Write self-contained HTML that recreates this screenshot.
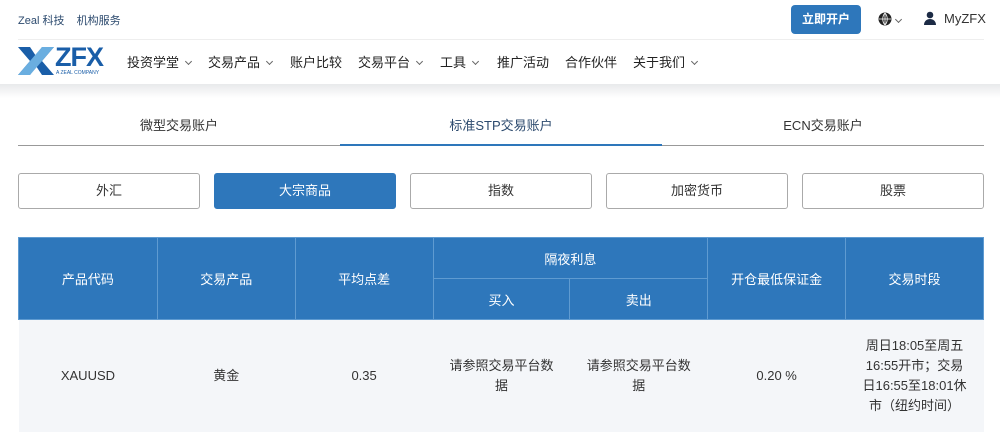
<!DOCTYPE html>
<html><head><meta charset="utf-8"><style>
*{margin:0;padding:0;box-sizing:border-box}
body{width:1000px;height:432px;overflow:hidden;background:#fff;font-family:"Liberation Sans","Noto Sans CJK SC",sans-serif;color:#333;position:relative}
.a{position:absolute}
.top{font-size:11px;color:#2c4a6e}
.nav span{position:absolute;top:52px;font-size:13px;color:#222}
.chev{display:inline-block;width:5px;height:5px;border-right:1px solid #666;border-bottom:1px solid #666;transform:rotate(45deg);margin-left:7px;position:relative;top:-3px}
.tab{top:115px;font-size:13px;width:322px;text-align:center}
.btn{top:173px;width:182px;height:36px;border:1px solid #aaa;border-radius:3px;font-size:13px;text-align:center;line-height:34px;color:#333}
table{position:absolute;left:18px;top:237px;width:966px;border-collapse:collapse;font-size:13px;text-align:center}
th{background:#2e77bb;color:#fff;font-weight:normal;border:1px solid #5f9bd1}
td{background:#f4f6f9;height:112px;line-height:20px;vertical-align:middle}
</style></head><body>
<div class="a top" style="left:18px;top:12px">Zeal 科技&nbsp;&nbsp;&nbsp;&nbsp;机构服务</div>
<div class="a" style="left:791px;top:5px;width:70px;height:29px;background:#2e77bb;border-radius:4px;color:#fff;font-size:12px;font-weight:bold;text-align:center;line-height:29px">立即开户</div>
<svg class="a" style="left:878px;top:12px" width="14" height="14" viewBox="0 0 14 14"><circle cx="7" cy="7" r="6.5" fill="#222"/><path d="M1 7h12M7 1v12M7 1c-3 3-3 9 0 12M7 1c3 3 3 9 0 12" stroke="#fff" stroke-width=".8" fill="none"/></svg>
<span class="a" style="left:894px;top:12px"><i class="chev" style="margin-left:2px"></i></span>
<svg class="a" style="left:923px;top:11px" width="14" height="14" viewBox="0 0 14 14"><circle cx="7" cy="4" r="3.3" fill="#1c2b45"/><path d="M1 14c0-4 3-6 6-6s6 2 6 6z" fill="#1c2b45"/></svg>
<div class="a" style="left:944px;top:11px;font-size:13px;color:#333">MyZFX</div>
<div class="a" style="left:18px;top:39px;width:966px;height:1px;background:#eee"></div>
<svg class="a" style="left:18px;top:47px" width="36" height="28" viewBox="0 0 36 28"><path d="M0 0h12l6 9 6-9h12L24 14l12 14H24l-6-9-6 9H0l12-14z" fill="#1a5ea8"/><path d="M12 14L0 28h12l12-14L36 0H24z" fill="#6aaee0"/></svg>
<div class="a" style="left:55px;top:42px;font-size:27px;color:#1a5ea8;font-weight:bold;letter-spacing:-1px">ZFX</div>
<div class="a" style="left:56px;top:70px;font-size:5px;color:#1a5ea8">A ZEAL COMPANY</div>
<div class="nav">
<span style="left:127px">投资学堂<i class="chev"></i></span>
<span style="left:208px">交易产品<i class="chev"></i></span>
<span style="left:290px">账户比较</span>
<span style="left:358px">交易平台<i class="chev"></i></span>
<span style="left:440px">工具<i class="chev"></i></span>
<span style="left:497px">推广活动</span>
<span style="left:565px">合作伙伴</span>
<span style="left:633px">关于我们<i class="chev"></i></span>
</div>
<div class="a" style="left:0;top:84px;width:1000px;height:14px;background:linear-gradient(#e8e9eb,#fff)"></div>
<div class="a tab" style="left:18px">微型交易账户</div>
<div class="a tab" style="left:340px;color:#2c4a6e">标准STP交易账户</div>
<div class="a tab" style="left:662px">ECN交易账户</div>
<div class="a" style="left:18px;top:145px;width:966px;height:1px;background:#999"></div>
<div class="a" style="left:340px;top:144px;width:322px;height:2px;background:#2e77bb"></div>
<div class="a btn" style="left:18px">外汇</div>
<div class="a btn" style="left:214px;background:#2e77bb;border-color:#2e77bb;color:#fff">大宗商品</div>
<div class="a btn" style="left:410px">指数</div>
<div class="a btn" style="left:606px">加密货币</div>
<div class="a btn" style="left:802px">股票</div>
<table>
<tr style="height:41px"><th rowspan="2" style="width:139px">产品代码</th><th rowspan="2" style="width:138px">交易产品</th><th rowspan="2" style="width:138px">平均点差</th><th colspan="2">隔夜利息</th><th rowspan="2" style="width:138px">开仓最低保证金</th><th rowspan="2" style="width:138px">交易时段</th></tr>
<tr style="height:41px"><th style="width:137px">买入</th><th style="width:138px">卖出</th></tr>
<tr><td>XAUUSD</td><td>黄金</td><td>0.35</td><td style="padding:0 12px">请参照交易平台数据</td><td style="padding:0 12px">请参照交易平台数据</td><td>0.20 %</td><td style="padding:0 14px">周日18:05至周五16:55开市；交易日16:55至18:01休市（纽约时间）</td></tr>
</table>
</body></html>
